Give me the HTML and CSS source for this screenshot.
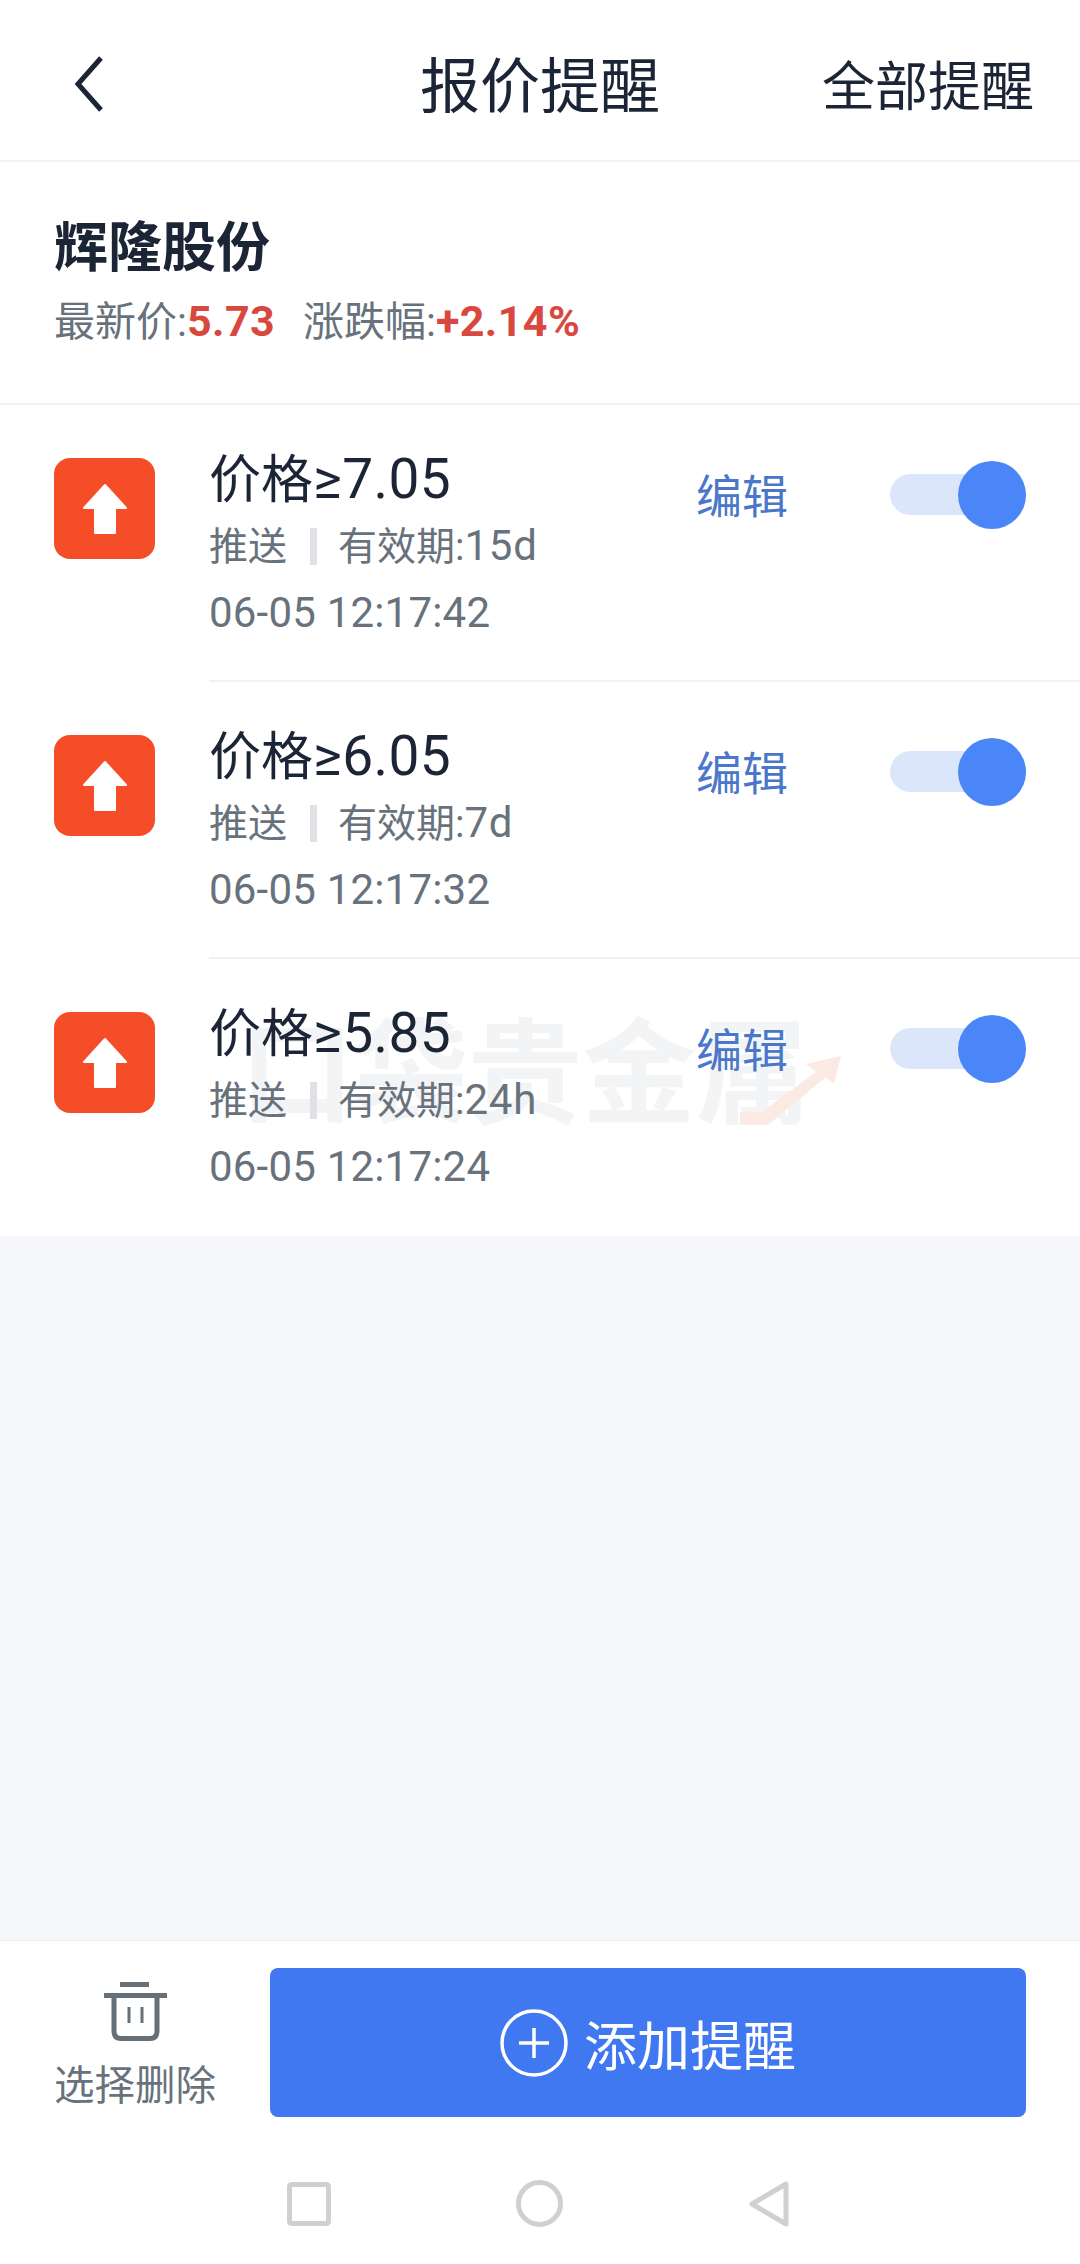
FILE: index.html
```html
<html>
    <head>
        <title>报价提醒</title>
        <link rel="stylesheet" href="styles.css">
    </head>
    <body>
        <div class="page">
            <div class="topbar">
                <svg class="back" viewBox="0 0 30 56"><path d="M27 2 L4 28 L27 54" fill="none" stroke="#1b2536" stroke-width="5"/></svg>
                <div class="title">报价提醒</div>
                <div class="all-link">全部提醒</div>
            </div>
            <div class="stock">
                <div class="stock-name">辉隆股份</div>
                <div class="stock-info">
                    <span>最新价:<b>5.73</b></span>
                    <span>涨跌幅:<b>+2.14%</b></span>
                </div>
            </div>
            <div class="alert">
                <svg class="alert-icon" viewBox="0 0 101 101"><rect width="101" height="101" rx="16" fill="#f54d27"/><path d="M51 27 L72 50 L61 50 L61 75 L41 75 L41 50 L30 50 Z" fill="#fff" stroke="#fff" stroke-width="2" stroke-linejoin="round"/></svg>
                <div class="alert-body">
                    <div class="alert-text">
                        <div class="alert-price">价格<span class="num">≥7.05</span></div>
                        <div class="alert-sub"><span>推送</span><i class="bar"></i><span>有效期:<span class="num">15d</span></span></div>
                        <div class="alert-date">06-05 12:17:42</div>
                    </div>
                    <div class="edit">编辑</div>
                    <div class="switch"><div class="knob"></div></div>
                </div>
            </div>
            <div class="alert">
                <svg class="alert-icon" viewBox="0 0 101 101"><rect width="101" height="101" rx="16" fill="#f54d27"/><path d="M51 27 L72 50 L61 50 L61 75 L41 75 L41 50 L30 50 Z" fill="#fff" stroke="#fff" stroke-width="2" stroke-linejoin="round"/></svg>
                <div class="alert-body">
                    <div class="alert-text">
                        <div class="alert-price">价格<span class="num">≥6.05</span></div>
                        <div class="alert-sub"><span>推送</span><i class="bar"></i><span>有效期:<span class="num">7d</span></span></div>
                        <div class="alert-date">06-05 12:17:32</div>
                    </div>
                    <div class="edit">编辑</div>
                    <div class="switch"><div class="knob"></div></div>
                </div>
            </div>
            <div class="alert last">
                <div class="watermark">
                    <span>口袋贵金属</span>
                    <svg class="watermark-arrow" viewBox="0 0 101 69"><path d="M0 69 L0 56 L22 56 L76 16 L66 8 L101 0 L94 28 L86 21 L28 69 Z" fill="#fbe9e4"/></svg>
                </div>
                <svg class="alert-icon" viewBox="0 0 101 101"><rect width="101" height="101" rx="16" fill="#f54d27"/><path d="M51 27 L72 50 L61 50 L61 75 L41 75 L41 50 L30 50 Z" fill="#fff" stroke="#fff" stroke-width="2" stroke-linejoin="round"/></svg>
                <div class="alert-body">
                    <div class="alert-text">
                        <div class="alert-price">价格<span class="num">≥5.85</span></div>
                        <div class="alert-sub"><span>推送</span><i class="bar"></i><span>有效期:<span class="num">24h</span></span></div>
                        <div class="alert-date">06-05 12:17:24</div>
                    </div>
                    <div class="edit">编辑</div>
                    <div class="switch"><div class="knob"></div></div>
                </div>
            </div>
            <div class="empty"></div>
            <div class="footer">
                <div class="delete">
                    <svg class="trash" viewBox="0 0 63 59"><path d="M16 2.5 H45 M0 13.5 H63" stroke="#667078" stroke-width="5" fill="none"/><path d="M10 13.5 V49 Q10 56.5 17 56.5 H46 Q53 56.5 53 49 V13.5" stroke="#667078" stroke-width="5" fill="none"/><path d="M25 25 V41 M38 25 V41" stroke="#667078" stroke-width="3" fill="none"/></svg>
                    <div class="delete-label">选择删除</div>
                </div>
                <div class="add-btn">
                    <svg class="plus" viewBox="0 0 68 68"><circle cx="34" cy="34" r="32" fill="none" stroke="#fff" stroke-width="3.5"/><path d="M19 34 H49 M34 19 V49" stroke="#fff" stroke-width="3.5"/></svg>
                    <span>添加提醒</span>
                </div>
            </div>
            <div class="navbar">
                <svg class="nav-square" viewBox="0 0 44 44"><rect x="2.5" y="2.5" width="39" height="39" rx="2" fill="none" stroke="#d0d0d0" stroke-width="5"/></svg>
                <svg class="nav-circle" viewBox="0 0 47 47"><circle cx="23.5" cy="23.5" r="21" fill="none" stroke="#d0d0d0" stroke-width="5"/></svg>
                <svg class="nav-back" viewBox="0 0 40 46"><path d="M37 3 V43 L3 23 Z" fill="none" stroke="#d0d0d0" stroke-width="5" stroke-linejoin="round"/></svg>
            </div>
        </div>
    </body>
</html>
```

FILE: styles.css
```css
body{
    margin: 0;
    background: #fff;
    color: #1b2536;
    font-family: Roboto, "Noto Sans CJK SC", sans-serif;
}

.page{
    width: 1080px;
    height: 2264px;
    display: flex;
    flex-direction: column;
    overflow: hidden;
}

.topbar{
    height: 144px;
    flex-shrink: 0;
    display: grid;
    grid-template-columns: 1fr auto 1fr;
    align-items: center;
    padding: 16px 46px 0 46px;
    border-bottom: 2px solid #f2f2f2;
}
.back{
    width: 30px;
    height: 56px;
    margin: -8px 0 0 28px;
}
.title{
    font-size: 60px;
    line-height: 70px;
}
.all-link{
    justify-self: end;
    font-size: 53px;
    line-height: 70px;
}

.stock{
    height: 243px;
    flex-shrink: 0;
    box-sizing: border-box;
    padding: 55px 0 0 54px;
    border-bottom: 2px solid #f2f2f2;
}
.stock-name{
    font-size: 54px;
    line-height: 64px;
    font-weight: 700;
}
.stock-info{
    display: flex;
    gap: 28px;
    margin-top: 12px;
    font-size: 41px;
    line-height: 56px;
    color: #68727c;
}
.stock-info b{
    color: #d9483f;
    font-size: 43px;
    font-weight: 700;
    letter-spacing: 0.4px;
}

.alert{
    position: relative;
    display: flex;
    align-items: flex-start;
    padding-left: 54px;
    height: 277px;
    flex-shrink: 0;
    box-sizing: border-box;
}
.alert-icon{
    width: 101px;
    height: 101px;
    margin: 53px 54px 0 0;
    flex-shrink: 0;
}
.alert-body{
    flex: 1;
    height: 277px;
    box-sizing: border-box;
    display: flex;
    align-items: flex-start;
    border-bottom: 2px solid #f2f2f2;
    position: relative;
}
.alert.last .alert-body{
    border-bottom: none;
}
.alert-text{
    width: 487px;
    padding-top: 44px;
}
.alert-price{
    font-size: 52px;
    line-height: 60px;
}
.alert-price .num{
    font-size: 55px;
    letter-spacing: 0.4px;
}
.alert-sub{
    display: flex;
    align-items: center;
    margin-top: 10px;
    font-size: 39px;
    line-height: 50px;
    color: #68727c;
}
.alert-sub .num{
    font-size: 42px;
    letter-spacing: 0.8px;
}
.bar{
    width: 7px;
    height: 37px;
    margin: 0 21px 0 23px;
    background: #dfe1e4;
}
.alert-date{
    margin-top: 16px;
    font-size: 42px;
    line-height: 50px;
    letter-spacing: 0.2px;
    color: #68727c;
}
.edit{
    width: 194px;
    margin-top: 62px;
    font-size: 46px;
    line-height: 60px;
    color: #4a77c9;
}
.switch{
    width: 136px;
    height: 41px;
    margin-top: 69px;
    border-radius: 21px;
    background: #dce6fa;
    display: flex;
    align-items: center;
    justify-content: flex-end;
}
.knob{
    width: 68px;
    height: 68px;
    flex-shrink: 0;
    border-radius: 50%;
    background: #4a86f7;
}

.watermark{
    position: absolute;
    left: 240px;
    top: 56px;
    font-size: 114px;
    line-height: 120px;
    font-weight: 700;
    color: #f3f4f6;
    white-space: nowrap;
}
.watermark-arrow{
    position: absolute;
    left: 500px;
    top: 41px;
    width: 101px;
    height: 69px;
}

.empty{
    flex: 1;
    background: #f5f7fb;
}

.footer{
    height: 177px;
    flex-shrink: 0;
    box-sizing: border-box;
    display: flex;
    align-items: flex-start;
    padding: 27px 54px 0 54px;
    border-top: 1px solid #eeeeee;
}
.delete{
    width: 216px;
    flex-shrink: 0;
    display: flex;
    flex-direction: column;
}
.trash{
    width: 63px;
    height: 59px;
    margin: 14px 0 0 50px;
}
.delete-label{
    margin-top: 15px;
    font-size: 40.5px;
    line-height: 60px;
    color: #68727c;
}
.add-btn{
    width: 756px;
    height: 149px;
    border-radius: 8px;
    background: #4078f2;
    color: #fff;
    display: flex;
    align-items: center;
    justify-content: center;
    gap: 16px;
    font-size: 53px;
}
.plus{
    width: 68px;
    height: 68px;
}

.navbar{
    height: 147px;
    flex-shrink: 0;
    display: flex;
    align-items: flex-start;
    padding: 0 0 0 287px;
}
.nav-square{
    width: 44px;
    height: 44px;
    margin-top: 65px;
}
.nav-circle{
    width: 47px;
    height: 47px;
    margin: 63px 0 0 185px;
}
.nav-back{
    width: 40px;
    height: 46px;
    margin: 64px 0 0 186px;
}
```
